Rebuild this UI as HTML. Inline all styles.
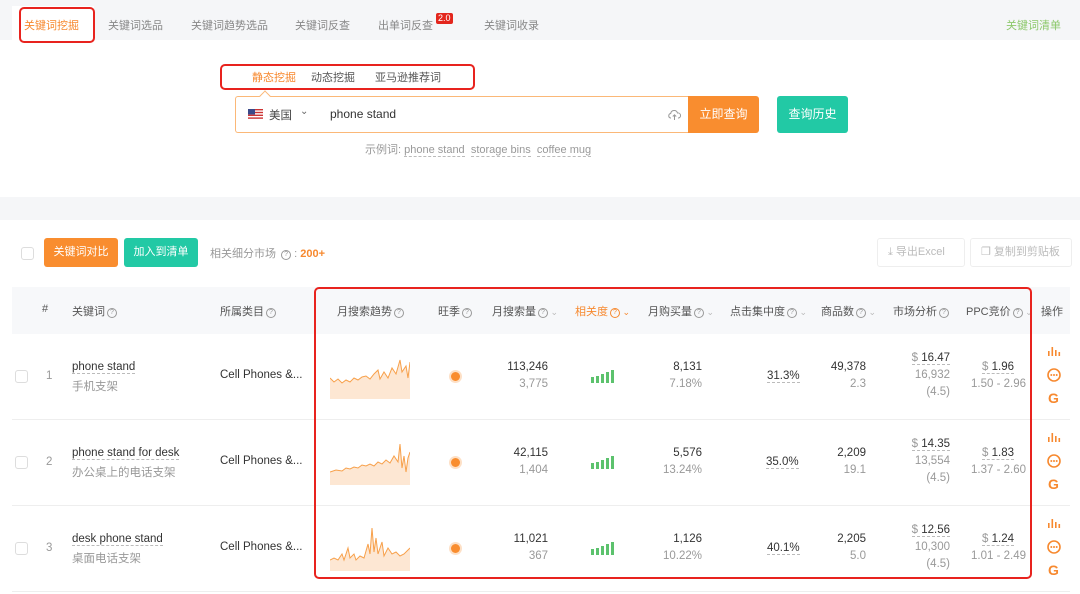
<!DOCTYPE html>
<html><head><meta charset="utf-8"><style>
*{box-sizing:border-box;margin:0;padding:0}
body{width:1080px;height:594px;overflow:hidden;background:#fff;font-family:"Liberation Sans","Noto Sans CJK SC",sans-serif;font-size:11.5px;color:#333;position:relative}
.a{position:absolute;white-space:nowrap}
.g{color:#999}
.r{text-align:right}
.q{display:inline-block;width:10px;height:10px;border:1px solid #999;border-radius:50%;font-size:7px;line-height:8px;text-align:center;color:#999;vertical-align:1px;margin-left:2px}
.cb{position:absolute;width:13px;height:13px;border:1px solid #ddd;border-radius:3px;background:#fff}
.ul{border-bottom:1px dashed #bbb}
.hd{font-size:11px;color:#555}
.hd .dn{color:#bbb;font-size:9px}
.rb{position:absolute;border:2.5px solid #e8231e;border-radius:5px}
</style></head><body>
<div class="a" style="left:0;top:0;width:1080px;height:40px;background:#f5f6f8"></div>
<div class="a" style="left:12px;top:6px;width:82px;height:34px;background:#fff"></div>
<div class="a" style="left:24px;top:17px;color:#f7892f;font-size:11px">关键词挖掘</div>
<div class="a" style="left:108px;top:17px;color:#888;font-size:11px">关键词选品</div>
<div class="a" style="left:191px;top:17px;color:#888;font-size:11px">关键词趋势选品</div>
<div class="a" style="left:295px;top:17px;color:#888;font-size:11px">关键词反查</div>
<div class="a" style="left:378px;top:17px;color:#888;font-size:11px">出单词反查</div>
<div class="a" style="left:436px;top:13px;background:#e3261d;color:#fff;font-size:9px;padding:0 2px;border-radius:2px;line-height:11px">2.0</div>
<div class="a" style="left:484px;top:17px;color:#888;font-size:11px">关键词收录</div>
<div class="a" style="left:1006px;top:17px;color:#8cc86a;font-size:11px">关键词清单</div>
<div class="rb" style="left:19px;top:7px;width:76px;height:36px"></div>

<div class="a" style="left:252px;top:69px;color:#f7892f;font-size:11px">静态挖掘</div>
<div class="a" style="left:311px;top:69px;color:#555;font-size:11px">动态挖掘</div>
<div class="a" style="left:375px;top:69px;color:#555;font-size:11px">亚马逊推荐词</div>
<div class="rb" style="left:220px;top:64px;width:255px;height:26px"></div>

<div class="a" style="left:235px;top:96px;width:454px;height:37px;border:1px solid #fbb878;border-right:none;border-radius:3px 0 0 3px"></div>
<div class="a" style="left:261px;top:92px;width:8px;height:8px;background:#fff;border-left:1px solid #fbb878;border-top:1px solid #fbb878;transform:rotate(45deg)"></div>
<svg class="a" style="left:248px;top:109px" width="15" height="10"><rect width="15" height="10" fill="#fff"/><g fill="#c33"><rect y="0" width="15" height="1.4"/><rect y="2.8" width="15" height="1.4"/><rect y="5.6" width="15" height="1.4"/><rect y="8.4" width="15" height="1.4"/></g><rect width="7" height="5.5" fill="#3b4a8a"/></svg>
<div class="a" style="left:269px;top:107px;color:#444">美国</div>
<div class="a" style="left:300px;top:106px;color:#666;font-size:10px">⌄</div>
<div class="a" style="left:330px;top:107px;color:#333;font-size:12px">phone stand</div>
<svg class="a" style="left:668px;top:109px" width="13" height="12" viewBox="0 0 13 12"><path d="M3 9H2.5A2.3 2.3 0 0 1 2.7 4.5 3.5 3.5 0 0 1 9.5 4 2.5 2.5 0 0 1 10.5 9H10M6.5 11V6M4.8 7.5 6.5 5.8 8.2 7.5" fill="none" stroke="#999" stroke-width="1"/></svg>
<div class="a" style="left:688px;top:96px;width:71px;height:37px;background:#f98d2f;border-radius:0 3px 3px 0;color:#fff;font-size:12px;text-align:center;line-height:37px">立即查询</div>
<div class="a" style="left:777px;top:96px;width:71px;height:37px;background:#22c9a5;border-radius:3px;color:#fff;font-size:12px;text-align:center;line-height:37px">查询历史</div>
<div class="a g" style="left:365px;top:141px;font-size:11px">示例词: <span class="ul">phone stand</span>&nbsp; <span class="ul">storage bins</span>&nbsp; <span class="ul">coffee mug</span></div>

<div class="a" style="left:0;top:197px;width:1080px;height:23px;background:#f5f6f8"></div>

<div class="cb" style="left:21px;top:247px"></div>
<div class="a" style="left:44px;top:238px;width:74px;height:29px;background:#f98d2f;border-radius:3px;color:#fff;text-align:center;line-height:29px;font-size:11px">关键词对比</div>
<div class="a" style="left:124px;top:238px;width:74px;height:29px;background:#22c9a5;border-radius:3px;color:#fff;text-align:center;line-height:29px;font-size:11px">加入到清单</div>
<div class="a g" style="left:210px;top:245px;font-size:11px">相关细分市场 <span class="q">?</span> : <b style="color:#f7892f">200+</b></div>
<div class="a" style="left:877px;top:238px;width:88px;height:29px;border:1px solid #eee;border-radius:3px;color:#bbb;line-height:27px;padding-left:10px;font-size:11px">⤓ 导出Excel</div>
<div class="a" style="left:970px;top:238px;width:102px;height:29px;border:1px solid #eee;border-radius:3px;color:#bbb;line-height:27px;padding-left:10px;font-size:11px">❐ 复制到剪贴板</div>

<div class="a" style="left:12px;top:287px;width:1058px;height:47px;background:#f7f8fa"></div>
<div class="a hd" style="left:42px;top:303px">#</div>
<div class="a hd" style="left:72px;top:303px">关键词<span class="q">?</span></div>
<div class="a hd" style="left:220px;top:303px">所属类目<span class="q">?</span></div>
<div class="a hd" style="left:337px;top:303px">月搜索趋势<span class="q">?</span></div>
<div class="a hd" style="left:438px;top:303px">旺季<span class="q">?</span></div>
<div class="a hd" style="left:492px;top:303px">月搜索量<span class="q">?</span><span class="dn"> ⌄</span></div>
<div class="a hd" style="left:575px;top:303px;color:#f7892f">相关度<span class="q" style="border-color:#f7892f;color:#f7892f">?</span><span style="font-size:9px"> ⌄</span></div>
<div class="a hd" style="left:648px;top:303px">月购买量<span class="q">?</span><span class="dn"> ⌄</span></div>
<div class="a hd" style="left:730px;top:303px">点击集中度<span class="q">?</span><span class="dn"> ⌄</span></div>
<div class="a hd" style="left:821px;top:303px">商品数<span class="q">?</span><span class="dn"> ⌄</span></div>
<div class="a hd" style="left:893px;top:303px">市场分析<span class="q">?</span></div>
<div class="a hd" style="left:966px;top:303px">PPC竞价<span class="q">?</span><span class="dn"> ⌄</span></div>
<div class="a hd" style="left:1041px;top:303px">操作</div>

<div class="a" style="left:12px;top:419px;width:1058px;border-top:1px solid #eee"></div>
<div class="a" style="left:12px;top:505px;width:1058px;border-top:1px solid #eee"></div>
<div class="a" style="left:12px;top:591px;width:1058px;border-top:1px solid #eee"></div>

<div class="cb" style="left:15px;top:370px"></div><div class="a g" style="left:46px;top:370px">1</div>
<div class="a" style="left:72px;top:361px"><span class="ul">phone stand</span></div><div class="a g" style="left:72px;top:378px">手机支架</div>
<div class="a" style="left:220px;top:369px">Cell Phones &amp;...</div>
<svg class="a" style="left:330px;top:352px" width="80" height="48"><path d="M0 26L4 30 8 27 12 31 16 28 20 30 24 26 28 28 32 25 36 24 40 27 44 22 48 18 50 27 54 20 58 26 62 16 66 22 70 8 72 20 76 14 78 26 80 10V47H0Z" fill="#fde7d3"/><path d="M0 26L4 30 8 27 12 31 16 28 20 30 24 26 28 28 32 25 36 24 40 27 44 22 48 18 50 27 54 20 58 26 62 16 66 22 70 8 72 20 76 14 78 26 80 10" fill="none" stroke="#f7a04a" stroke-width="1"/></svg>
<div class="a" style="left:451px;top:372px;width:9px;height:9px;border-radius:50%;background:#f98d2f;box-shadow:0 0 0 2px #fde0c6"></div>
<div class="a r" style="left:490px;top:361px;width:58px">113,246</div><div class="a r g" style="left:490px;top:378px;width:58px">3,775</div>
<svg class="a" style="left:591px;top:370px" width="25" height="13"><g fill="#5cc26d"><rect x="0" y="7" width="3" height="6"/><rect x="5" y="6" width="3" height="7"/><rect x="10" y="4" width="3" height="9"/><rect x="15" y="2" width="3" height="11"/><rect x="20" y="0" width="3" height="13"/></g></svg>
<div class="a r" style="left:640px;top:361px;width:62px">8,131</div><div class="a r g" style="left:640px;top:378px;width:62px">7.18%</div>
<div class="a" style="left:767px;top:370px"><span class="ul">31.3%</span></div>
<div class="a r" style="left:810px;top:361px;width:56px">49,378</div><div class="a r g" style="left:810px;top:378px;width:56px">2.3</div>
<div class="a r" style="left:880px;top:352px;width:70px"><span class="ul"><span class="g">$</span> 16.47</span></div><div class="a r g" style="left:880px;top:369px;width:70px">16,932</div><div class="a r g" style="left:880px;top:386px;width:70px">(4.5)</div>
<div class="a r" style="left:960px;top:361px;width:54px"><span class="ul"><span class="g">$</span> 1.96</span></div><div class="a g" style="left:971px;top:378px">1.50 - 2.96</div>

<div class="cb" style="left:15px;top:456px"></div><div class="a g" style="left:46px;top:456px">2</div>
<div class="a" style="left:72px;top:447px"><span class="ul">phone stand for desk</span></div><div class="a g" style="left:72px;top:464px">办公桌上的电话支架</div>
<div class="a" style="left:220px;top:455px">Cell Phones &amp;...</div>
<svg class="a" style="left:330px;top:438px" width="80" height="48"><path d="M0 34L6 32 12 33 16 30 20 31 24 29 28 30 32 27 36 28 40 26 44 28 48 24 52 26 56 22 60 25 64 18 68 24 70 6 72 30 74 18 76 34 78 20 80 14V47H0Z" fill="#fde7d3"/><path d="M0 34L6 32 12 33 16 30 20 31 24 29 28 30 32 27 36 28 40 26 44 28 48 24 52 26 56 22 60 25 64 18 68 24 70 6 72 30 74 18 76 34 78 20 80 14" fill="none" stroke="#f7a04a" stroke-width="1"/></svg>
<div class="a" style="left:451px;top:458px;width:9px;height:9px;border-radius:50%;background:#f98d2f;box-shadow:0 0 0 2px #fde0c6"></div>
<div class="a r" style="left:490px;top:447px;width:58px">42,115</div><div class="a r g" style="left:490px;top:464px;width:58px">1,404</div>
<svg class="a" style="left:591px;top:456px" width="25" height="13"><g fill="#5cc26d"><rect x="0" y="7" width="3" height="6"/><rect x="5" y="6" width="3" height="7"/><rect x="10" y="4" width="3" height="9"/><rect x="15" y="2" width="3" height="11"/><rect x="20" y="0" width="3" height="13"/></g></svg>
<div class="a r" style="left:640px;top:447px;width:62px">5,576</div><div class="a r g" style="left:640px;top:464px;width:62px">13.24%</div>
<div class="a" style="left:766px;top:456px"><span class="ul">35.0%</span></div>
<div class="a r" style="left:810px;top:447px;width:56px">2,209</div><div class="a r g" style="left:810px;top:464px;width:56px">19.1</div>
<div class="a r" style="left:880px;top:438px;width:70px"><span class="ul"><span class="g">$</span> 14.35</span></div><div class="a r g" style="left:880px;top:455px;width:70px">13,554</div><div class="a r g" style="left:880px;top:472px;width:70px">(4.5)</div>
<div class="a r" style="left:960px;top:447px;width:54px"><span class="ul"><span class="g">$</span> 1.83</span></div><div class="a g" style="left:971px;top:464px">1.37 - 2.60</div>

<div class="cb" style="left:15px;top:542px"></div><div class="a g" style="left:46px;top:542px">3</div>
<div class="a" style="left:72px;top:533px"><span class="ul">desk phone stand</span></div><div class="a g" style="left:72px;top:550px">桌面电话支架</div>
<div class="a" style="left:220px;top:541px">Cell Phones &amp;...</div>
<svg class="a" style="left:330px;top:524px" width="80" height="48"><path d="M0 36L4 34 8 36 12 30 14 36 18 24 20 34 24 30 26 36 30 32 34 34 38 20 40 30 42 4 44 28 46 14 48 30 52 18 54 32 58 24 62 30 66 28 70 32 74 30 80 24V47H0Z" fill="#fde7d3"/><path d="M0 36L4 34 8 36 12 30 14 36 18 24 20 34 24 30 26 36 30 32 34 34 38 20 40 30 42 4 44 28 46 14 48 30 52 18 54 32 58 24 62 30 66 28 70 32 74 30 80 24" fill="none" stroke="#f7a04a" stroke-width="1"/></svg>
<div class="a" style="left:451px;top:544px;width:9px;height:9px;border-radius:50%;background:#f98d2f;box-shadow:0 0 0 2px #fde0c6"></div>
<div class="a r" style="left:490px;top:533px;width:58px">11,021</div><div class="a r g" style="left:490px;top:550px;width:58px">367</div>
<svg class="a" style="left:591px;top:542px" width="25" height="13"><g fill="#5cc26d"><rect x="0" y="7" width="3" height="6"/><rect x="5" y="6" width="3" height="7"/><rect x="10" y="4" width="3" height="9"/><rect x="15" y="2" width="3" height="11"/><rect x="20" y="0" width="3" height="13"/></g></svg>
<div class="a r" style="left:640px;top:533px;width:62px">1,126</div><div class="a r g" style="left:640px;top:550px;width:62px">10.22%</div>
<div class="a" style="left:767px;top:542px"><span class="ul">40.1%</span></div>
<div class="a r" style="left:810px;top:533px;width:56px">2,205</div><div class="a r g" style="left:810px;top:550px;width:56px">5.0</div>
<div class="a r" style="left:880px;top:524px;width:70px"><span class="ul"><span class="g">$</span> 12.56</span></div><div class="a r g" style="left:880px;top:541px;width:70px">10,300</div><div class="a r g" style="left:880px;top:558px;width:70px">(4.5)</div>
<div class="a r" style="left:960px;top:533px;width:54px"><span class="ul"><span class="g">$</span> 1.24</span></div><div class="a g" style="left:971px;top:550px">1.01 - 2.49</div>

<svg class="a" style="left:1046px;top:346px" width="18" height="236">
<g id="ic"><g fill="#f7892f"><rect x="2" y="5" width="1.6" height="5"/><rect x="5.5" y="1" width="1.6" height="9"/><rect x="9" y="4" width="1.6" height="6"/><rect x="12.5" y="6" width="1.6" height="4"/></g>
<circle cx="8" cy="29" r="6" fill="none" stroke="#f7892f" stroke-width="1.6"/><g fill="#f7892f"><circle cx="5.3" cy="29" r="1"/><circle cx="8" cy="29" r="1"/><circle cx="10.7" cy="29" r="1"/></g>
<text x="2" y="57" font-family="Liberation Sans" font-weight="bold" font-size="14" fill="#f7892f">G</text></g>
<use href="#ic" y="86"/><use href="#ic" y="172"/>
</svg>

<div class="rb" style="left:314px;top:287px;width:718px;height:292px"></div>
</body></html>
